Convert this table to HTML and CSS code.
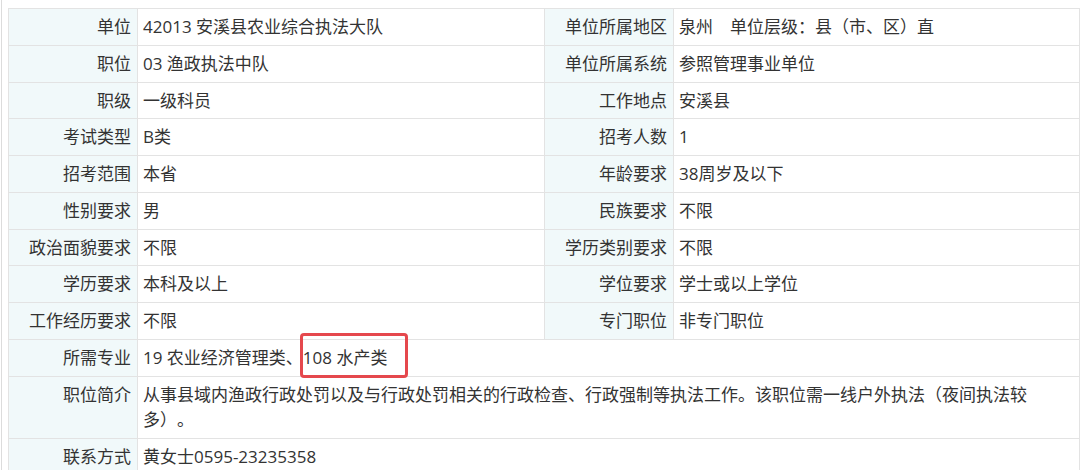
FILE: index.html
```html
<!DOCTYPE html>
<html lang="zh-CN">
<head>
<meta charset="utf-8">
<title>职位信息</title>
<link rel="stylesheet" href="styles.css">
</head>
<body>
<div class="page">
  <table class="info">
    <colgroup>
      <col class="c-label">
      <col class="c-value">
      <col class="c-label">
      <col class="c-value2">
    </colgroup>
    <tbody>
      <tr><th>单位</th><td>42013 安溪县农业综合执法大队</td><th>单位所属地区</th><td>泉州　单位层级：县（市、区）直</td></tr>
      <tr><th>职位</th><td>03 渔政执法中队</td><th>单位所属系统</th><td>参照管理事业单位</td></tr>
      <tr><th>职级</th><td>一级科员</td><th>工作地点</th><td>安溪县</td></tr>
      <tr><th>考试类型</th><td>B类</td><th>招考人数</th><td>1</td></tr>
      <tr><th>招考范围</th><td>本省</td><th>年龄要求</th><td>38周岁及以下</td></tr>
      <tr><th>性别要求</th><td>男</td><th>民族要求</th><td>不限</td></tr>
      <tr><th>政治面貌要求</th><td>不限</td><th>学历类别要求</th><td>不限</td></tr>
      <tr><th>学历要求</th><td>本科及以上</td><th>学位要求</th><td>学士或以上学位</td></tr>
      <tr><th>工作经历要求</th><td>不限</td><th>专门职位</th><td>非专门职位</td></tr>
      <tr><th>所需专业</th><td colspan="3">19 农业经济管理类、<span class="hl">108 水产类</span></td></tr>
      <tr><th>职位简介</th><td colspan="3">从事县域内渔政行政处罚以及与行政处罚相关的行政检查、行政强制等执法工作。该职位需一线户外执法（夜间执法较多）。</td></tr>
      <tr><th>联系方式</th><td colspan="3">黄女士0595-23235358</td></tr>
    </tbody>
  </table>
</div>
</body>
</html>
```
FILE: styles.css
```css
html, body {
  margin: 0;
  padding: 0;
  background: #ffffff;
}

body {
  font-family: "Open Sans", "Noto Sans CJK SC", sans-serif;
  color: #333333;
  text-spacing-trim: space-all;
}

.page {
  margin-left: 1px;
  border-left: 1px solid #dcdcdc;
  padding: 8px 0 0 6px;
  min-height: 470px;
  box-sizing: border-box;
}

.info {
  width: 1071px;
  border-collapse: collapse;
  table-layout: fixed;
  font-size: 17px;
}

.c-label { width: 129px; }
.c-value { width: 407px; }
.c-value2 { width: 406px; }

.info th,
.info td {
  border: 1px solid #e3e3e3;
  padding: 5px 6px 5px 5px;
  line-height: 25.75px;
  height: 25.75px;
  vertical-align: top;
  font-weight: normal;
  text-spacing-trim: space-all;
}

.info th {
  background: #f1f9fa;
  text-align: right;
}

.info td {
  text-align: left;
  background: #ffffff;
}

.hl {
  position: relative;
}

.hl::after {
  content: "";
  position: absolute;
  left: -3px;
  right: -21px;
  top: -13px;
  bottom: -9px;
  border: 3px solid #e5484d;
  border-radius: 4px;
}
```
